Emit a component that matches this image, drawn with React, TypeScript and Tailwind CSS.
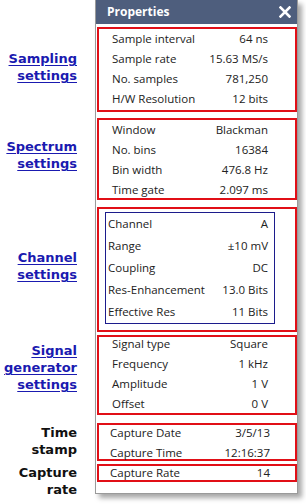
import React from "react";

type Row = [string, string];

const sampling: Row[] = [
  ["Sample interval", "64 ns"],
  ["Sample rate", "15.63 MS/s"],
  ["No. samples", "781,250"],
  ["H/W Resolution", "12 bits"],
];

const spectrum: Row[] = [
  ["Window", "Blackman"],
  ["No. bins", "16384"],
  ["Bin width", "476.8 Hz"],
  ["Time gate", "2.097 ms"],
];

const channel: Row[] = [
  ["Channel", "A"],
  ["Range", "±10 mV"],
  ["Coupling", "DC"],
  ["Res-Enhancement", "13.0 Bits"],
  ["Effective Res", "11 Bits"],
];

const generator: Row[] = [
  ["Signal type", "Square"],
  ["Frequency", "1 kHz"],
  ["Amplitude", "1 V"],
  ["Offset", "0 V"],
];

const timestamp: Row[] = [
  ["Capture Date", "3/5/13"],
  ["Capture Time", "12:16:37"],
];

function Rows({ rows, rowClass }: { rows: Row[]; rowClass: string }) {
  return (
    <>
      {rows.map(([label, value]) => (
        <div key={label} className={`flex items-center justify-between ${rowClass}`}>
          <span>{label}</span>
          <span>{value}</span>
        </div>
      ))}
    </>
  );
}

function SideLabel({ lines, link = true, className = "" }: { lines: string[]; link?: boolean; className?: string }) {
  return (
    <div
      className={`flex flex-col items-end text-[13px] font-bold leading-[17px] ${
        link ? "text-[#1a1ab0] underline underline-offset-2" : "text-[#111]"
      } ${className}`}
    >
      {lines.map((l) => (
        <span key={l}>{l}</span>
      ))}
    </div>
  );
}

export default function App() {
  return (
    <div className="flex h-[504px] w-[306px] bg-white font-['Open_Sans',sans-serif] text-[11.5px] text-[#222]">
      {/* left captions */}
      <div className="flex w-[95px] flex-col pr-[18px] font-['DejaVu_Sans',sans-serif]">
        <SideLabel lines={["Sampling", "settings"]} className="mt-[50px]" />
        <SideLabel lines={["Spectrum", "settings"]} className="mt-[54px]" />
        <SideLabel lines={["Channel", "settings"]} className="mt-[77px]" />
        <SideLabel lines={["Signal", "generator", "settings"]} className="mt-[59px]" />
        <SideLabel lines={["Time", "stamp"]} link={false} className="mt-[31px]" />
        <SideLabel lines={["Capture", "rate"]} link={false} className="mt-[6px]" />
      </div>

      {/* properties panel */}
      <div className="flex h-[494px] w-[203px] flex-col border-x border-b border-[#9a9a9a] bg-white shadow-[4px_4px_5px_rgba(0,0,0,0.35)]">
        <div className="flex h-[24px] items-center justify-between bg-[#4e5e7d] pl-[11px] pr-[6px] text-[12px] font-bold text-white">
          <span>Properties</span>
          <svg width="12" height="12" viewBox="0 0 12 12">
            <path d="M1.5 1.5 L10.5 10.5 M10.5 1.5 L1.5 10.5" stroke="white" strokeWidth="2.6" strokeLinecap="square" />
          </svg>
        </div>

        <div className="flex flex-col pl-px pt-[3px]">
          <div className="h-[85px] border-2 border-[#e10f17] pl-[13px] pr-[27px]">
            <Rows rows={sampling} rowClass="h-[20px]" />
          </div>

          <div className="mt-[6px] h-[82px] border-2 border-[#e10f17] pl-[13px] pr-[27px]">
            <Rows rows={spectrum} rowClass="h-[20px]" />
          </div>

          <div className="mt-[7px] h-[125px] border-2 border-[#e10f17] pl-[6px] pt-[3px]">
            <div className="w-[170px] border border-[#1c1c8c] pl-[2px] pr-[6px]">
              <Rows rows={channel} rowClass="h-[22px]" />
            </div>
          </div>

          <div className="mt-[3px] h-[80px] border-2 border-[#e10f17] pl-[13px] pr-[27px]">
            <div className="-mt-[3px]">
              <Rows rows={generator} rowClass="h-[20px]" />
            </div>
          </div>

          <div className="mt-[8px] h-[38px] border-2 border-[#e10f17] pl-[11px] pr-[25px]">
            <div className="-mt-[2px]">
              <Rows rows={timestamp} rowClass="h-[20px]" />
            </div>
          </div>

          <div className="mt-[3px] h-[18px] border-2 border-[#e10f17] pl-[11px] pr-[25px]">
            <Rows rows={[["Capture Rate", "14"]]} rowClass="h-[14px]" />
          </div>
        </div>
      </div>
    </div>
  );
}
